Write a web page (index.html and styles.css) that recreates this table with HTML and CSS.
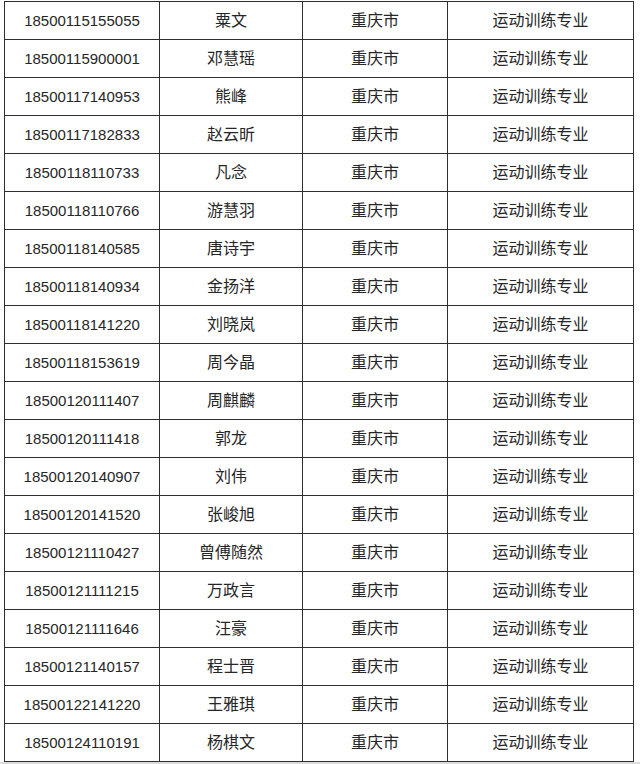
FILE: index.html
```html
<!DOCTYPE html>
<html lang="zh-CN">
<head>
<meta charset="utf-8">
<link rel="stylesheet" href="styles.css">
</head>
<body>
<div class="sheet">
<table class="roster">
<colgroup><col class="c1"><col class="c2"><col class="c3"><col class="c4"></colgroup>
<tbody>
<tr><td class="num">18500115155055</td><td>粟文</td><td>重庆市</td><td>运动训练专业</td></tr>
<tr><td class="num">18500115900001</td><td>邓慧瑶</td><td>重庆市</td><td>运动训练专业</td></tr>
<tr><td class="num">18500117140953</td><td>熊峰</td><td>重庆市</td><td>运动训练专业</td></tr>
<tr><td class="num">18500117182833</td><td>赵云昕</td><td>重庆市</td><td>运动训练专业</td></tr>
<tr><td class="num">18500118110733</td><td>凡念</td><td>重庆市</td><td>运动训练专业</td></tr>
<tr><td class="num">18500118110766</td><td>游慧羽</td><td>重庆市</td><td>运动训练专业</td></tr>
<tr><td class="num">18500118140585</td><td>唐诗宇</td><td>重庆市</td><td>运动训练专业</td></tr>
<tr><td class="num">18500118140934</td><td>金扬洋</td><td>重庆市</td><td>运动训练专业</td></tr>
<tr><td class="num">18500118141220</td><td>刘晓岚</td><td>重庆市</td><td>运动训练专业</td></tr>
<tr><td class="num">18500118153619</td><td>周今晶</td><td>重庆市</td><td>运动训练专业</td></tr>
<tr><td class="num">18500120111407</td><td>周麒麟</td><td>重庆市</td><td>运动训练专业</td></tr>
<tr><td class="num">18500120111418</td><td>郭龙</td><td>重庆市</td><td>运动训练专业</td></tr>
<tr><td class="num">18500120140907</td><td>刘伟</td><td>重庆市</td><td>运动训练专业</td></tr>
<tr><td class="num">18500120141520</td><td>张峻旭</td><td>重庆市</td><td>运动训练专业</td></tr>
<tr><td class="num">18500121110427</td><td>曾傅随然</td><td>重庆市</td><td>运动训练专业</td></tr>
<tr><td class="num">18500121111215</td><td>万政言</td><td>重庆市</td><td>运动训练专业</td></tr>
<tr><td class="num">18500121111646</td><td>汪豪</td><td>重庆市</td><td>运动训练专业</td></tr>
<tr><td class="num">18500121140157</td><td>程士晋</td><td>重庆市</td><td>运动训练专业</td></tr>
<tr><td class="num">18500122141220</td><td>王雅琪</td><td>重庆市</td><td>运动训练专业</td></tr>
<tr><td class="num">18500124110191</td><td>杨棋文</td><td>重庆市</td><td>运动训练专业</td></tr>
</tbody>
</table>
</div>
</body>
</html>
```
FILE: styles.css
```css
html, body {
  margin: 0;
  padding: 0;
  background: #dcdcdc;
}
.sheet {
  background: #ffffff;
  height: 762px;
  padding-top: 1px;
  padding-left: 4px;
  box-sizing: border-box;
  overflow: hidden;
}
.roster {
  border-collapse: collapse;
  table-layout: fixed;
  width: 629px;
  font-family: "Liberation Sans", "Noto Sans CJK SC", sans-serif;
  font-size: 16px;
  color: #262626;
}
.c1 { width: 155px; }
.c2 { width: 143px; }
.c3 { width: 145px; }
.c4 { width: 186px; }
.roster td {
  border: 1px solid #2e2e2e;
  height: 38px;
  padding: 0;
  text-align: center;
  vertical-align: middle;
  line-height: 20px;
  box-sizing: border-box;
}
.roster td.num {
  font-size: 15px;
}
```
